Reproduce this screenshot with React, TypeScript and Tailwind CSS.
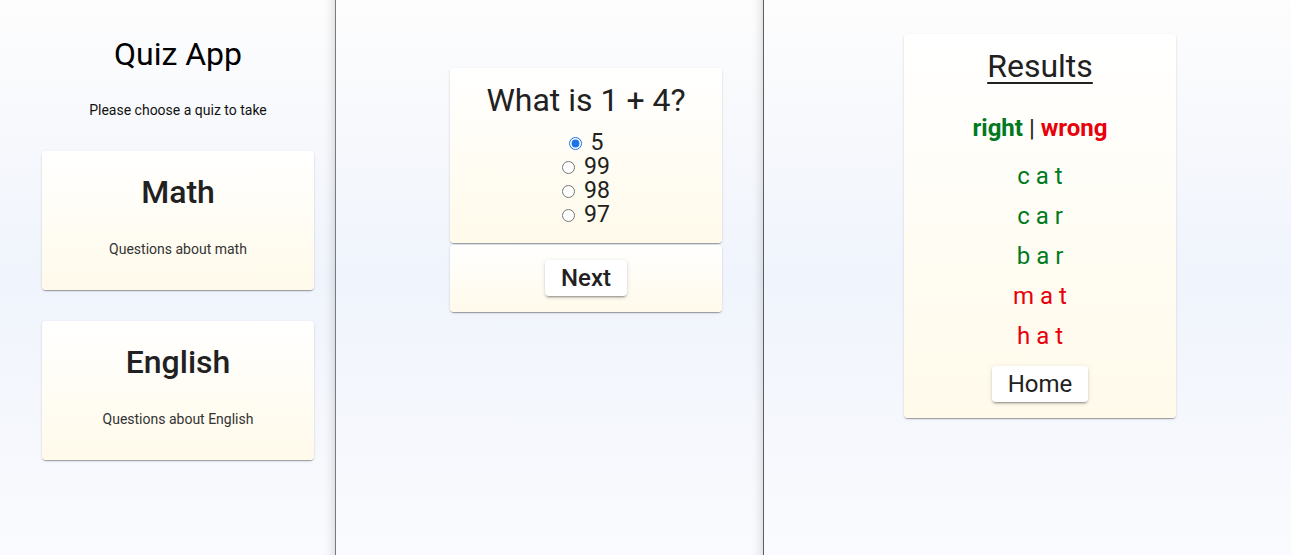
import React from "react";

const cardCls =
  "w-[272px] rounded-[4px] bg-[linear-gradient(180deg,#ffffff_0%,#fffaea_100%)] shadow-[0px_2px_1px_-1px_rgba(0,0,0,0.2),0px_1px_1px_0px_rgba(0,0,0,0.14),0px_1px_3px_0px_rgba(0,0,0,0.12)]";

const btnCls =
  "h-[36px] rounded-[4px] bg-white text-[24px] leading-[36px] text-[#212121] shadow-[0px_3px_1px_-2px_rgba(0,0,0,0.2),0px_2px_2px_0px_rgba(0,0,0,0.14),0px_1px_5px_0px_rgba(0,0,0,0.12)]";

function QuizCard({ title, desc }: { title: string; desc: string }) {
  return (
    <div className={`${cardCls} flex flex-col items-center pt-[22px] pb-[31px]`}>
      <div className="text-[32px] leading-[38px] font-medium text-[#212121]">{title}</div>
      <div className="mt-[28px] text-[14px] leading-[20px] text-[#333]">{desc}</div>
    </div>
  );
}

export default function App() {
  const options = ["5", "99", "98", "97"];
  const words: { w: string; ok: boolean }[] = [
    { w: "c a t", ok: true },
    { w: "c a r", ok: true },
    { w: "b a r", ok: true },
    { w: "m a t", ok: false },
    { w: "h a t", ok: false },
  ];
  return (
    <div
      className="flex h-[555px] w-[1291px] overflow-hidden bg-[linear-gradient(180deg,#fdfdfd_0%,#f0f4fc_50%,#fafbfe_100%)]"
      style={{ fontFamily: "Roboto, 'Noto Sans', Arial, sans-serif" }}
    >
      {/* Panel 1 */}
      <div className="flex w-[336px] shrink-0 flex-col border-r border-[#7a7a7a] pl-[42px] pt-[35px] shadow-[inset_-10px_0_10px_-8px_rgba(0,0,0,0.14)]">
        <div className="w-[272px] text-center text-[32px] leading-[38px] text-black">Quiz App</div>
        <div className="mt-[27px] w-[272px] text-center text-[14px] leading-[20px] text-[#111]">
          Please choose a quiz to take
        </div>
        <div className="mt-[31px] flex flex-col gap-[31px]">
          <QuizCard title="Math" desc="Questions about math" />
          <QuizCard title="English" desc="Questions about English" />
        </div>
      </div>

      {/* Panel 2 */}
      <div className="flex w-[428px] shrink-0 flex-col border-r border-[#5e5e5e] pl-[114px] pt-[68px] shadow-[inset_-10px_0_10px_-8px_rgba(0,0,0,0.14)]">
        <div className={`${cardCls} flex flex-col items-center pt-[13px] pb-[16px]`}>
          <div className="text-[32px] leading-[38px] text-[#212121]">What is 1 + 4?</div>
          <div className="mt-[12px] flex flex-col items-center">
            {options.map((o, i) => (
              <label key={o} className="flex h-[24px] items-center text-[23px] leading-[24px] text-[#212121]">
                <input
                  type="radio"
                  name="q"
                  defaultChecked={i === 0}
                  className="m-0 mr-[9px] h-[13px] w-[13px] accent-[#1a73e8]"
                />
                {o}
              </label>
            ))}
          </div>
        </div>
        <div className={`${cardCls} mt-[2px] flex justify-center pt-[15px] pb-[16px]`}>
          <button className={`${btnCls} w-[82px] font-medium`}>Next</button>
        </div>
      </div>

      {/* Panel 3 */}
      <div className="flex flex-1 flex-col pl-[140px] pt-[34px]">
        <div className={`${cardCls} flex flex-col items-center pt-[13px] pb-[16px]`}>
          <div className="text-[32px] leading-[38px] text-[#212121] underline decoration-[2px] underline-offset-[5px]">
            Results
          </div>
          <div className="mt-[31px] text-[24px] leading-[24px] text-[#212121]">
            <span className="font-bold text-[#007a1f]">right</span> |{" "}
            <span className="font-bold text-[#e8000b]">wrong</span>
          </div>
          <div className="mt-[16px] flex flex-col items-center">
            {words.map((w) => (
              <div
                key={w.w}
                className={`py-[8px] text-[24px] leading-[24px] ${w.ok ? "text-[#007a1f]" : "text-[#e8000b]"}`}
              >
                {w.w}
              </div>
            ))}
          </div>
          <button className={`${btnCls} mt-[10px] w-[96px]`}>Home</button>
        </div>
      </div>
    </div>
  );
}
